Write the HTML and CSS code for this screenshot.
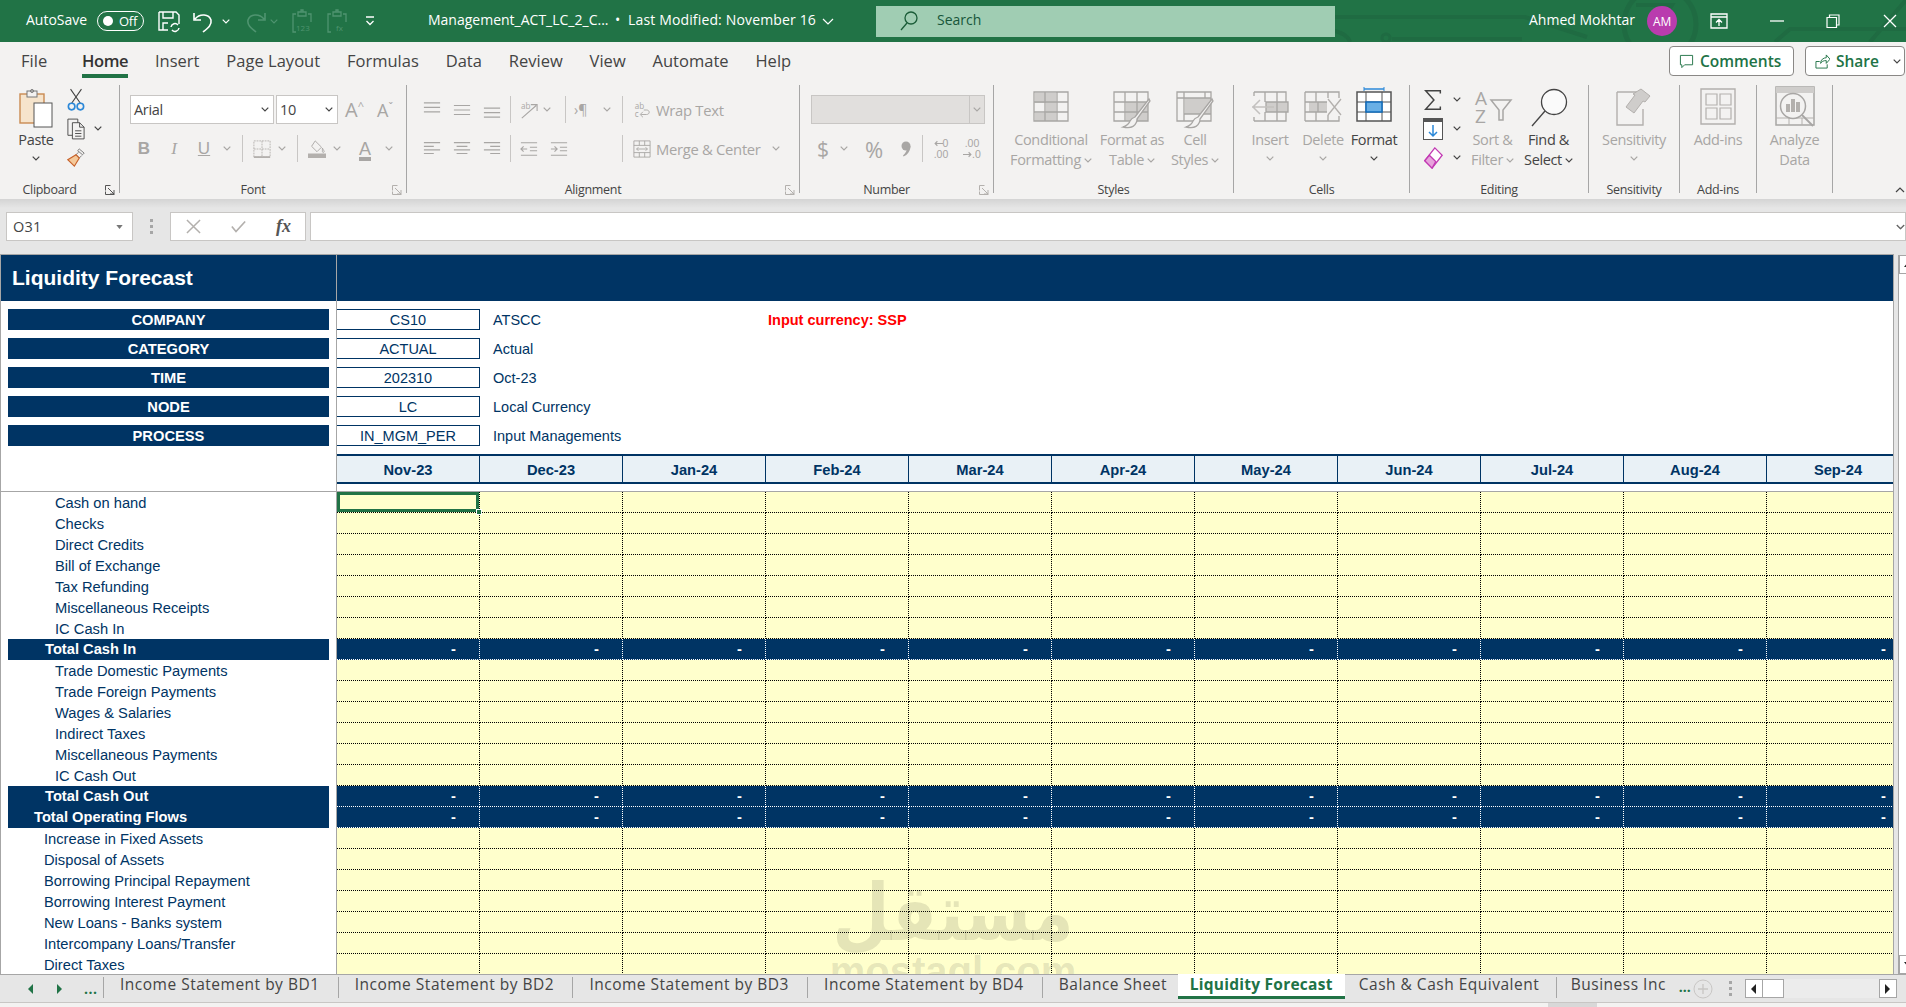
FILE: index.html
```html
<!DOCTYPE html>
<html lang="en">
<head>
<meta charset="utf-8">
<title>Liquidity Forecast</title>
<link rel="stylesheet" href="styles.css">
</head>
<body>
<svg class="sprite" aria-hidden="true">
  <symbol id="chev" viewBox="0 0 8 5"><path d="M.7.7 4 4l3.3-3.3" fill="none" stroke="currentColor" stroke-width="1.2"/></symbol>
  <symbol id="launch" viewBox="0 0 10 10"><path d="M.5 5.5V.5h5M3 3l6 6M9 5v4H5M9.5 9.500h-9v-3" fill="none" stroke="currentColor"/></symbol>
</svg>

<header class="titlebar">
  <svg class="circuit" viewBox="0 0 1906 42" aria-hidden="true"><path d="M1335 17h190l62 20M1392 39h130M1775 42l15-13h116M1870 42l36-42M1330 30c12 2 18 6 20 12" fill="none" stroke="#1f6b42" stroke-width="4"/><circle cx="1660" cy="24" r="36" fill="none" stroke="#1f6b42" stroke-width="5"/><circle cx="1386" cy="38" r="4" fill="none" stroke="#1f6b42" stroke-width="3"/><path d="M1636 5h36l-14 22" fill="none" stroke="#1f6b42" stroke-width="4"/></svg>
  <div class="tb-left">
    <span class="autosave">AutoSave</span>
    <span class="toggle"><i class="dot"></i>Off</span>
    <svg class="qa save" viewBox="0 0 24 24"><path d="M2 3h17l3 3v9M2 3v18h9M6 3v6h10V3M6 21v-7h5" fill="none" stroke="#fff" stroke-width="1.4"/><path d="M14 18a4 4 0 0 1 7-2m1 3a4 4 0 0 1-7 2" fill="none" stroke="#fff" stroke-width="1.5"/></svg>
    <svg class="qa undo" viewBox="0 0 24 24"><path d="M2 4v7h7M3 10c5-6 14-5 16 1 1 5-3 8-8 12" fill="none" stroke="#fff" stroke-width="1.6"/></svg>
    <svg class="qc undoc"><use href="#chev"/></svg>
    <svg class="qa redo" viewBox="0 0 24 24"><path d="M22 4v7h-7M21 10C16 4 7 5 5 11c-1 5 3 8 8 12" fill="none" stroke="#4f9470" stroke-width="1.6"/></svg>
    <svg class="qc redoc dim"><use href="#chev"/></svg>
    <svg class="qa pv" viewBox="0 0 24 24"><path d="M6 5H3v18h3M18 5h3v8M8 3h8v4H8zM11 3V1h2v2" fill="none" stroke="#4f9470" stroke-width="1.3"/><text x="6" y="22" class="pvt">123</text></svg>
    <svg class="qa pf" viewBox="0 0 24 24"><path d="M6 5H3v18h3M18 5h3v8M8 3h8v4H8zM11 3V1h2v2" fill="none" stroke="#4f9470" stroke-width="1.3"/><text x="11" y="22" class="pvt">fx</text></svg>
    <svg class="qat" viewBox="0 0 12 12"><path d="M2 2h8M2.500 6 6 9.500 9.500 6" fill="none" stroke="#fff" stroke-width="1.3"/></svg>
    <span class="filename">Management_ACT_LC_2_C...</span><span class="bullet">•</span><span class="modified">Last Modified: November 16</span>
    <svg class="fchev" viewBox="0 0 12 7"><path d="M1 1l5 5 5-5" fill="none" stroke="#fff" stroke-width="1.2"/></svg>
  </div>
  <div class="search">
    <svg class="search-ic" viewBox="0 0 18 20"><circle cx="11" cy="7" r="6" fill="none" stroke="#1a5c38" stroke-width="1.3"/><path d="M7 12 1 19" stroke="#1a5c38" stroke-width="1.3"/></svg>
    <span class="search-tx">Search</span>
  </div>
  <div class="tb-right">
    <span class="username">Ahmed Mokhtar</span>
    <span class="avatar">AM</span>
    <svg class="win rd" viewBox="0 0 18 16"><path d="M1 1h16v14H1zM1 4h16M9 13V7M6 9.500 9 6.500l3 3" fill="none" stroke="#fff" stroke-width="1.3"/></svg>
    <svg class="win mn" viewBox="0 0 14 14"><path d="M0 7h14" stroke="#fff" stroke-width="1.3"/></svg>
    <svg class="win rs" viewBox="0 0 14 14"><path d="M1 3.500h9.500v10H1zM3.500 3.500V1H13v10h-3" fill="none" stroke="#fff" stroke-width="1.2"/></svg>
    <svg class="win cl" viewBox="0 0 14 14"><path d="M1 1l12 12M13 1 1 13" stroke="#fff" stroke-width="1.3"/></svg>
  </div>
</header>

<nav class="menutabs">
  <span class="mt file">File</span>
  <span class="mt active">Home</span>
  <span class="mt">Insert</span>
  <span class="mt">Page Layout</span>
  <span class="mt">Formulas</span>
  <span class="mt">Data</span>
  <span class="mt">Review</span>
  <span class="mt">View</span>
  <span class="mt">Automate</span>
  <span class="mt">Help</span>
  <button class="cta comments"><svg viewBox="0 0 16 16"><path d="M1.500 1.500h13v10H6l-3 3v-3H1.500z" fill="none" stroke="#217346"/></svg>Comments</button>
  <button class="cta share"><svg viewBox="0 0 16 16"><path d="M1 15V8h4M1 15h12v-4M6 10c0-4 3-6 6-6V1l4 4.500L12 10V7c-3 0-5 1-6 3z" fill="none" stroke="#217346"/></svg>Share<svg class="share-c"><use href="#chev"/></svg></button>
</nav>

<section class="ribbon">
  <div class="group g-clip">
    <div class="gbody">
      <div class="big b-paste">
        <svg class="bi w34" viewBox="0 0 34 45"><rect x="1" y="9" width="24" height="29" fill="#f6e4cc" stroke="#c98b52" stroke-width="1.400"/><rect x="8" y="6" width="10" height="6" fill="#f3f2f1" stroke="#777"/><circle cx="13" cy="6" r="1.500" fill="none" stroke="#777"/><rect x="15" y="18" width="18" height="24" fill="#fff" stroke="#555"/></svg>
        <span class="tx">Paste</span>
        <svg class="cv"><use href="#chev"/></svg>
      </div>
      <div class="smallcol sc-clip">
        <div class="srow"><svg class="si" viewBox="0 0 16 22"><path d="M3 1l9 13M13 1 4 14" stroke="#444" fill="none"/><circle cx="4" cy="17" r="3" fill="none" stroke="#2b88d8" stroke-width="1.500"/><circle cx="12" cy="17" r="3" fill="none" stroke="#2b88d8" stroke-width="1.500"/></svg></div>
        <div class="srow"><svg class="si" viewBox="0 0 20 24"><path d="M6 19H1V1h11v4M6 5h8l5 5v13H6zM14 5v5h5M9 14h7M9 17h7M9 20h7" fill="none" stroke="#444"/></svg><svg class="cv cv-copy"><use href="#chev"/></svg></div>
        <div class="srow"><svg class="si" viewBox="0 0 22 24"><path d="M13 3l2-2 6 5-2 2zM14 5l-3 3 4 4 3-3" fill="#f3f2f1" stroke="#666"/><path d="M11 8l4 4-6 10L1 14z" fill="#f4c99a" stroke="#c8622a" stroke-width="1.400"/></svg></div>
      </div>
    </div>
    <div class="glabel"><span></span><span>Clipboard</span><svg class="launcher dark"><use href="#launch"/></svg></div>
  </div>

  <div class="group g-font">
    <div class="gbody stack p-font">
      <div class="row">
        <div class="sel-box font-sel"><span>Arial</span><svg class="cv dark"><use href="#chev"/></svg></div>
        <div class="sel-box size-sel"><span>10</span><svg class="cv dark"><use href="#chev"/></svg></div>
        <span class="grow-a">A<sup>^</sup></span><span class="shrink-a">A<sup>ˇ</sup></span>
      </div>
      <div class="row">
        <span class="c30 off-b">B</span><span class="c30 off-i">I</span><span class="c30 off-u">U</span><svg class="cv c16"><use href="#chev"/></svg>
        <i class="vsep"></i>
        <svg class="c24 ic20" viewBox="0 0 20 20"><path d="M1 1h18v18H1zM10 1v18M1 10h18" fill="none" stroke="#b3b0ad" stroke-dasharray="2 1"/><path d="M1 19h18" stroke="#b3b0ad" stroke-width="2"/></svg><svg class="cv c16"><use href="#chev"/></svg>
        <i class="vsep"></i>
        <svg class="c24 ic20" viewBox="0 0 20 20"><path d="M8 1l7 7-5 5-6-6zM16 9c1 2 2 3 2 4s-2 1-2 0 0-2 0-4z" fill="none" stroke="#a8a6a4"/><rect y="15" width="20" height="5" fill="#b3b0ad"/></svg><svg class="cv c16"><use href="#chev"/></svg>
        <span class="c40 off-color">A</span><svg class="cv c8"><use href="#chev"/></svg>
      </div>
    </div>
    <div class="glabel"><span></span><span>Font</span><svg class="launcher"><use href="#launch"/></svg></div>
  </div>

  <div class="group g-align">
    <div class="gbody stack p-align">
      <div class="row">
        <svg class="c30 ic20" viewBox="0 0 20 20"><path d="M1 2h18M1 7h18M1 12h18" stroke="#a8a6a4" stroke-width="1.300"/></svg>
        <svg class="c30 ic20" viewBox="0 0 20 20"><path d="M1 5h18M1 10h18M1 15h18" stroke="#a8a6a4" stroke-width="1.300"/></svg>
        <svg class="c30 ic20" viewBox="0 0 20 20"><path d="M1 8h18M1 13h18M1 18h18" stroke="#a8a6a4" stroke-width="1.300"/></svg>
        <i class="vsep vs-a"></i>
        <svg class="c20 ic20" viewBox="0 0 20 20"><path d="M2 19 18 5M12 4h7v7" fill="none" stroke="#a8a6a4" stroke-width="1.200"/><text x="1" y="9" class="ab">ab</text></svg><svg class="cv c16"><use href="#chev"/></svg>
        <i class="vsep vs-b"></i>
        <span class="para c20">›¶</span><svg class="cv c26"><use href="#chev"/></svg>
        <i class="vsep vs-c"></i>
        <svg class="c20 ic20" viewBox="0 0 20 20"><text x="2" y="9" class="ab">ab</text><text x="2" y="18" class="ab">c</text><path d="M9 15h6c4 0 4-5 0-5h-3M11 12l-3 3 3 3" fill="none" stroke="#a8a6a4"/></svg>
        <span class="dimtx">Wrap Text</span>
      </div>
      <div class="row">
        <svg class="c30 ic20" viewBox="0 0 20 20"><path d="M1 3h18M1 7h11M1 11h18M1 15h11" stroke="#a8a6a4" stroke-width="1.300"/></svg>
        <svg class="c30 ic20" viewBox="0 0 20 20"><path d="M1 3h18M4 7h12M1 11h18M4 15h12" stroke="#a8a6a4" stroke-width="1.300"/></svg>
        <svg class="c30 ic20" viewBox="0 0 20 20"><path d="M1 3h18M8 7h11M1 11h18M8 15h11" stroke="#a8a6a4" stroke-width="1.300"/></svg>
        <i class="vsep vs-a"></i>
        <svg class="c20 ic20" viewBox="0 0 20 20"><path d="M1 3h18M11 8h8M11 12h8M1 17h18M8 10H1M4 7l-3 3 3 3" fill="none" stroke="#a8a6a4" stroke-width="1.200"/></svg>
        <svg class="c40 ic20" viewBox="0 0 40 20"><path d="M11 3h18M21 8h8M21 12h8M11 17h18M11 10h7M15 7l3 3-3 3" fill="none" stroke="#a8a6a4" stroke-width="1.200"/></svg>
        <i class="vsep vs-d"></i>
        <svg class="c20 ic20" viewBox="0 0 20 20"><path d="M1 1h18v18H1zM1 6h18M1 14h18M7 1v5M13 1v5M7 14v5M13 14v5M4 10h12M6 8l-2 2 2 2M14 8l2 2-2 2" fill="none" stroke="#a8a6a4"/></svg>
        <span class="dimtx">Merge &amp; Center</span><svg class="cv cv-merge"><use href="#chev"/></svg>
      </div>
    </div>
    <div class="glabel"><span></span><span>Alignment</span><svg class="launcher"><use href="#launch"/></svg></div>
  </div>

  <div class="group g-num">
    <div class="gbody stack p-num">
      <div class="row">
        <div class="num-sel"><span></span><svg class="cv"><use href="#chev"/></svg></div>
      </div>
      <div class="row">
        <span class="c26 dollar">$</span><svg class="cv c16"><use href="#chev"/></svg>
        <span class="c44 pct">%</span>
        <svg class="comma" viewBox="0 0 10 16"><circle cx="5" cy="5" r="4.500" fill="#a8a6a4"/><path d="M9.500 5c0 5-3 9-7 10.500L2 14.500C5 12 6 9 6 7z" fill="#a8a6a4"/></svg>
        <i class="vsep vs-n"></i>
        <span class="dec dec1"><svg viewBox="0 0 8 8"><path d="M8 4H1M3 2 1 4l2 2" fill="none" stroke="#a8a6a4"/></svg>0<br>.00</span>
        <span class="dec dec2">.00<br><svg viewBox="0 0 8 8"><path d="M0 4h7M5 2l2 2-2 2" fill="none" stroke="#a8a6a4"/></svg>.0</span>
      </div>
    </div>
    <div class="glabel"><span></span><span>Number</span><svg class="launcher"><use href="#launch"/></svg></div>
  </div>

  <div class="group g-styles">
    <div class="gbody">
      <div class="big b-cf">
        <svg class="bi w36" viewBox="0 0 36 45"><path d="M2 8h21v10H2zM13 18h10v10H13zM2 28h21v8H2z" fill="#cfcdcb"/><path d="M1 7h34v29H1zM1 17h34M1 27h34M12 7v29M24 7v29" fill="none" stroke="#a8a6a4" stroke-width="1.300"/></svg>
        <span class="tx dimc">Conditional</span><span class="tx dimc">Formatting<svg class="cv inl"><use href="#chev"/></svg></span>
      </div>
      <div class="big b-ft">
        <svg class="bi w38" viewBox="0 0 38 45"><path d="M13 17h22v19H13z" fill="#cfcdcb"/><path d="M1 7h34v29H1zM1 17h34M1 27h34M12 7v29M24 7v29" fill="none" stroke="#a8a6a4" stroke-width="1.300"/><path d="M36 14 22 32c-3 1-4 2-5 4-1 3-4 5-7 6 5 1 11 1 13-4 1-1 1-3 1-4L37 16z" fill="#f3f2f1" stroke="#a8a6a4" stroke-width="1.300"/></svg>
        <span class="tx dimc">Format as</span><span class="tx dimc">Table<svg class="cv inl"><use href="#chev"/></svg></span>
      </div>
      <div class="big b-cs">
        <svg class="bi w38" viewBox="0 0 38 45"><path d="M9 13h26v16H9z" fill="#cfcdcb"/><path d="M1 7h34v29H1zM1 13h34M8 7v29M29 7v6M8 29h27" fill="none" stroke="#a8a6a4" stroke-width="1.300"/><path d="M36 14 22 32c-3 1-4 2-5 4-1 3-4 5-7 6 5 1 11 1 13-4 1-1 1-3 1-4L37 16z" fill="#f3f2f1" stroke="#a8a6a4" stroke-width="1.300"/></svg>
        <span class="tx dimc">Cell</span><span class="tx dimc">Styles<svg class="cv inl"><use href="#chev"/></svg></span>
      </div>
    </div>
    <div class="glabel center"><span>Styles</span></div>
  </div>

  <div class="group g-cells">
    <div class="gbody">
      <div class="big b-ins">
        <svg class="bi w38" viewBox="0 0 38 45"><path d="M15 17h22v10H15z" fill="#cfcdcb"/><path d="M3 7h32v10M3 36h32V27M3 7v4M3 36v-4M14 7v10M26 7v10M14 27v9M26 27v9M15 17h22v10H15zM26 17v10" fill="none" stroke="#a8a6a4" stroke-width="1.300"/><path d="M1 22h22M9 15l-7 7 7 7" fill="none" stroke="#c3c1bf" stroke-width="1.500"/></svg>
        <span class="tx dimc">Insert</span><svg class="cv"><use href="#chev"/></svg>
      </div>
      <div class="big b-del">
        <svg class="bi w38" viewBox="0 0 38 45"><path d="M5 17h18v10H5z" fill="#cfcdcb"/><path d="M1 7h34v6M1 36h34v-5M1 7v29M1 17h22M1 27h22M12 7v10M24 7v6M12 27v9M24 30v6M14 17v10" fill="none" stroke="#a8a6a4" stroke-width="1.300"/><path d="M24 14l13 16M37 14 24 30" stroke="#b3b0ad" stroke-width="1.300"/></svg>
        <span class="tx dimc">Delete</span><svg class="cv"><use href="#chev"/></svg>
      </div>
      <div class="big b-fmt">
        <svg class="bi w36" viewBox="0 0 36 45"><path d="M8 4h20" stroke="#2b88d8" stroke-width="1.500"/><path d="M8 2v4M28 2v4" stroke="#2b88d8"/><rect x="1" y="7" width="34" height="29" fill="#fff" stroke="#555" stroke-width="1.500"/><path d="M1 17h34M1 27h34M10 7v29M26 7v29" stroke="#555"/><rect x="10" y="17" width="16" height="10" fill="#69afe5" stroke="#0f6cbd" stroke-width="1.500"/></svg>
        <span class="tx">Format</span><svg class="cv dark"><use href="#chev"/></svg>
      </div>
    </div>
    <div class="glabel center"><span>Cells</span></div>
  </div>

  <div class="group g-edit">
    <div class="gbody">
      <div class="smallcol sc-edit">
        <div class="srow"><svg class="si2" viewBox="0 0 20 24"><path d="M18 5V2H2l9 10L2 22h16v-3" fill="none" stroke="#444" stroke-width="1.600"/></svg><svg class="cv dark c16"><use href="#chev"/></svg></div>
        <div class="srow"><svg class="si2" viewBox="0 0 20 22"><rect x=".5" y=".5" width="19" height="21" fill="#fff" stroke="#555"/><path d="M1 2.500h18" stroke="#555" stroke-width="3"/><path d="M10 7v11M6 14l4 4 4-4" fill="none" stroke="#2b88d8" stroke-width="1.500"/></svg><svg class="cv dark c16"><use href="#chev"/></svg></div>
        <div class="srow"><svg class="si2" viewBox="0 0 22 24"><path d="M13 1l8 8-11 14-8-8z" fill="#fff" stroke="#c239b3" stroke-width="1.400"/><path d="M7 9l7 7-4 7-8-8z" fill="#e7a3dc" stroke="#c239b3" stroke-width="1.400"/></svg><svg class="cv dark c16"><use href="#chev"/></svg></div>
      </div>
      <div class="big b-sort">
        <svg class="bi w40" viewBox="0 0 40 45"><text x="2" y="20" class="az">A</text><text x="2" y="38" class="az">Z</text><path d="M18 15h20l-8 10v10h-4V25z" fill="none" stroke="#a8a6a4" stroke-width="1.500"/></svg>
        <span class="tx dimc">Sort &amp;</span><span class="tx dimc">Filter<svg class="cv inl"><use href="#chev"/></svg></span>
      </div>
      <div class="big b-find">
        <svg class="bi w40" viewBox="0 0 40 45"><circle cx="25" cy="17" r="12.500" fill="#fafafa" stroke="#444" stroke-width="1.300"/><path d="M16 26 3 41" stroke="#444" stroke-width="1.300"/></svg>
        <span class="tx">Find &amp;</span><span class="tx">Select<svg class="cv inl dark"><use href="#chev"/></svg></span>
      </div>
    </div>
    <div class="glabel center"><span>Editing</span></div>
  </div>

  <div class="group g-sens">
    <div class="gbody center-body">
      <div class="big b-sens">
        <svg class="bi w36" viewBox="0 0 36 45"><path d="M1 7h20M1 7v33h26V24" fill="none" stroke="#b3b0ad" stroke-width="1.400"/><path d="M25 4l9 7-5 6-2-1-9 12-8-6 9-12-2-1z" fill="#cfcdcb" stroke="#b3b0ad"/></svg>
        <span class="tx dimc">Sensitivity</span><svg class="cv"><use href="#chev"/></svg>
      </div>
    </div>
    <div class="glabel center"><span>Sensitivity</span></div>
  </div>

  <div class="group g-addin">
    <div class="gbody center-body">
      <div class="big b-add">
        <svg class="bi w36" viewBox="0 0 36 45"><path d="M1 4h34v35H1z" fill="none" stroke="#b3b0ad" stroke-width="1.400"/><path d="M6 9h11v11H6zM20 9h11v11H20zM6 23h11v11H6zM20 23h11v11H20z" fill="none" stroke="#b3b0ad" stroke-width="1.200"/></svg>
        <span class="tx dimc">Add-ins</span>
      </div>
    </div>
    <div class="glabel center"><span>Add-ins</span></div>
  </div>

  <div class="group g-an">
    <div class="gbody center-body">
      <div class="big b-an">
        <svg class="bi w40" viewBox="0 0 40 45"><path d="M1 2h38v38H1z" fill="#f3f2f1" stroke="#a8a6a4" stroke-width="1.500"/><path d="M1 2h38v6H1z" fill="#cfcdcb"/><path d="M1 33h38M14 33v7M27 33v7" stroke="#b3b0ad"/><circle cx="18" cy="21" r="12.500" fill="#f3f2f1" stroke="#a8a6a4" stroke-width="1.500"/><path d="M11 19h4v8h-4zM16 14h4v13h-4zM21 17h4v10h-4z" fill="#b3b0ad"/><path d="M27 30l11 11" stroke="#a8a6a4" stroke-width="1.800"/></svg>
        <span class="tx dimc">Analyze</span><span class="tx dimc">Data</span>
      </div>
    </div>
  </div>

  <svg class="collapse" viewBox="0 0 10 6"><path d="M1 5l4-4 4 4" fill="none" stroke="#444" stroke-width="1.200"/></svg>
</section>
<div class="ribbon-shadow"></div>

<section class="formula">
  <div class="namebox"><span>O31</span><svg viewBox="0 0 8 5"><path d="M0 0h8L4 5z" fill="#777"/></svg></div>
  <div class="fdots"><i></i><i></i><i></i></div>
  <div class="fbtns">
    <svg viewBox="0 0 16 16"><path d="M1 1l14 14M15 1 1 15" stroke="#b3b0ad" stroke-width="1.600"/></svg>
    <svg viewBox="0 0 18 16"><path d="M1 8l5 6L17 2" fill="none" stroke="#b3b0ad" stroke-width="2"/></svg>
    <span class="fx">fx</span>
  </div>
  <div class="finput"><svg viewBox="0 0 8 5"><use href="#chev"/></svg></div>
</section>

<main class="workspace">
  <div class="sheet">
    <div class="head">
      <div class="hleft">
        <div class="title">Liquidity Forecast</div>
        <div class="bars">
          <div class="bar">COMPANY</div>
          <div class="bar">CATEGORY</div>
          <div class="bar">TIME</div>
          <div class="bar">NODE</div>
          <div class="bar">PROCESS</div>
        </div>
      </div>
      <div class="hright">
        <div class="title"></div>
        <div class="params">
          <div class="param"><span class="code">CS10</span><span class="desc">ATSCC</span><span class="note">Input currency: SSP</span></div>
          <div class="param"><span class="code">ACTUAL</span><span class="desc">Actual</span></div>
          <div class="param"><span class="code">202310</span><span class="desc">Oct-23</span></div>
          <div class="param"><span class="code">LC</span><span class="desc">Local Currency</span></div>
          <div class="param"><span class="code">IN_MGM_PER</span><span class="desc">Input Managements</span></div>
        </div>
        <div class="months">
          <span>Nov-23</span><span>Dec-23</span><span>Jan-24</span><span>Feb-24</span><span>Mar-24</span><span>Apr-24</span><span>May-24</span><span>Jun-24</span><span>Jul-24</span><span>Aug-24</span><span>Sep-24</span>
        </div>
      </div>
    </div>
    <table class="grid">
      <colgroup><col class="col-l"><col class="col-m"><col class="col-m"><col class="col-m"><col class="col-m"><col class="col-m"><col class="col-m"><col class="col-m"><col class="col-m"><col class="col-m"><col class="col-m"><col class="col-m"></colgroup>
      <tbody>
        <tr><th class="i1">Cash on hand</th><td class="cursor"><i class="handle"></i></td><td></td><td></td><td></td><td></td><td></td><td></td><td></td><td></td><td></td><td></td></tr>
        <tr><th class="i1">Checks</th><td></td><td></td><td></td><td></td><td></td><td></td><td></td><td></td><td></td><td></td><td></td></tr>
        <tr><th class="i1">Direct Credits</th><td></td><td></td><td></td><td></td><td></td><td></td><td></td><td></td><td></td><td></td><td></td></tr>
        <tr><th class="i1">Bill of Exchange</th><td></td><td></td><td></td><td></td><td></td><td></td><td></td><td></td><td></td><td></td><td></td></tr>
        <tr><th class="i1">Tax Refunding</th><td></td><td></td><td></td><td></td><td></td><td></td><td></td><td></td><td></td><td></td><td></td></tr>
        <tr><th class="i1">Miscellaneous Receipts</th><td></td><td></td><td></td><td></td><td></td><td></td><td></td><td></td><td></td><td></td><td></td></tr>
        <tr><th class="i1">IC Cash In</th><td></td><td></td><td></td><td></td><td></td><td></td><td></td><td></td><td></td><td></td><td></td></tr>
        <tr class="tot"><th class="i2"><span>Total Cash In</span></th><td>-</td><td>-</td><td>-</td><td>-</td><td>-</td><td>-</td><td>-</td><td>-</td><td>-</td><td>-</td><td>-</td></tr>
        <tr><th class="i1">Trade Domestic Payments</th><td></td><td></td><td></td><td></td><td></td><td></td><td></td><td></td><td></td><td></td><td></td></tr>
        <tr><th class="i1">Trade Foreign Payments</th><td></td><td></td><td></td><td></td><td></td><td></td><td></td><td></td><td></td><td></td><td></td></tr>
        <tr><th class="i1">Wages &amp; Salaries</th><td></td><td></td><td></td><td></td><td></td><td></td><td></td><td></td><td></td><td></td><td></td></tr>
        <tr><th class="i1">Indirect Taxes</th><td></td><td></td><td></td><td></td><td></td><td></td><td></td><td></td><td></td><td></td><td></td></tr>
        <tr><th class="i1">Miscellaneous Payments</th><td></td><td></td><td></td><td></td><td></td><td></td><td></td><td></td><td></td><td></td><td></td></tr>
        <tr><th class="i1">IC Cash Out</th><td></td><td></td><td></td><td></td><td></td><td></td><td></td><td></td><td></td><td></td><td></td></tr>
        <tr class="tot"><th class="i2"><span>Total Cash Out</span></th><td>-</td><td>-</td><td>-</td><td>-</td><td>-</td><td>-</td><td>-</td><td>-</td><td>-</td><td>-</td><td>-</td></tr>
        <tr class="tot"><th class="i3"><span>Total Operating Flows</span></th><td>-</td><td>-</td><td>-</td><td>-</td><td>-</td><td>-</td><td>-</td><td>-</td><td>-</td><td>-</td><td>-</td></tr>
        <tr><th class="i4">Increase in Fixed Assets</th><td></td><td></td><td></td><td></td><td></td><td></td><td></td><td></td><td></td><td></td><td></td></tr>
        <tr><th class="i4">Disposal of Assets</th><td></td><td></td><td></td><td></td><td></td><td></td><td></td><td></td><td></td><td></td><td></td></tr>
        <tr><th class="i4">Borrowing Principal Repayment</th><td></td><td></td><td></td><td></td><td></td><td></td><td></td><td></td><td></td><td></td><td></td></tr>
        <tr><th class="i4">Borrowing Interest Payment</th><td></td><td></td><td></td><td></td><td></td><td></td><td></td><td></td><td></td><td></td><td></td></tr>
        <tr><th class="i4">New Loans - Banks system</th><td></td><td></td><td></td><td></td><td></td><td></td><td></td><td></td><td></td><td></td><td></td></tr>
        <tr><th class="i4">Intercompany Loans/Transfer</th><td></td><td></td><td></td><td></td><td></td><td></td><td></td><td></td><td></td><td></td><td></td></tr>
        <tr><th class="i4">Direct Taxes</th><td></td><td></td><td></td><td></td><td></td><td></td><td></td><td></td><td></td><td></td><td></td></tr>
      </tbody>
    </table>
    <div class="watermark"><span class="wm-ar" lang="ar" dir="rtl">مستقل</span><span class="wm-en">mostaql.com</span></div>
  </div>
  <div class="vscroll">
    <div class="vbtn"><svg viewBox="0 0 8 5"><path d="M0 5h8L4 0z" fill="#222"/></svg></div>
    <div class="vbtn"><svg viewBox="0 0 8 5"><path d="M0 0h8L4 5z" fill="#222"/></svg></div>
  </div>
</main>

<footer class="tabbar">
  <div class="tabnav">
    <svg viewBox="0 0 5 10"><path d="M5 0v10L0 5z" fill="#217346"/></svg>
    <svg viewBox="0 0 5 10"><path d="M0 0v10l5-5z" fill="#217346"/></svg>
    <span>...</span>
  </div>
  <span class="stab t-i">Income Statement by BD1</span>
  <span class="stab t-i">Income Statement by BD2</span>
  <span class="stab t-i">Income Statement by BD3</span>
  <span class="stab t-i">Income Statement by BD4</span>
  <span class="stab t-b">Balance Sheet</span>
  <span class="stab t-a">Liquidity Forecast</span>
  <span class="stab t-c">Cash &amp; Cash Equivalent</span>
  <span class="stab t-n">Business Inc</span>
  <span class="more">...</span>
  <svg class="addsheet" viewBox="0 0 20 20"><circle cx="10" cy="10" r="9" fill="none" stroke="#c8c6c4"/><path d="M10 5v10M5 10h10" stroke="#c8c6c4" stroke-width="1.300"/></svg>
  <div class="fdots tabdots"><i></i><i></i><i></i></div>
  <div class="hscroll">
    <span class="hbtn"><svg viewBox="0 0 5 10"><path d="M5 0v10L0 5z" fill="#222"/></svg></span>
    <span class="hthumb"></span>
    <span class="htrack"></span>
    <span class="hbtn"><svg viewBox="0 0 5 10"><path d="M0 0v10l5-5z" fill="#222"/></svg></span>
  </div>
</footer>
<div class="status"><span class="status-blob"></span></div>
</body>
</html>
```

FILE: styles.css
```css
* { box-sizing: border-box; }
html, body { margin: 0; padding: 0; }
body {
  width: 1906px; height: 1007px; overflow: hidden;
  font-family: "Open Sans", "Noto Sans", sans-serif;
  background: #e6e6e6; color: #444;
  display: flex; flex-direction: column;
}
.sprite { display: none; }
svg { display: block; flex: none; }

/* Title bar */
.titlebar { height: 42px; background: #217346; color: #fff; display: flex; align-items: center; position: relative; flex: none; font-size: 14px; }
.circuit { position: absolute; inset: 0; width: 100%; height: 100%; }
.tb-left { width: 876px; display: flex; align-items: center; position: relative; }
.autosave, .filename, .modified, .username, .bullet, .search-tx { line-height: 18px; padding-bottom: 2px; }
.autosave { margin-left: 26px; width: 63px; white-space: nowrap; }
.toggle { margin-left: 8px; width: 47px; height: 20px; border: 1px solid #fff; border-radius: 10px; display: flex; align-items: center; font-size: 13px; padding-left: 5px; gap: 6px; letter-spacing: -.3px; }
.dot { width: 10px; height: 10px; border-radius: 50%; background: #fff; flex: none; }
.qa { width: 24px; height: 24px; }
.qc { width: 8px; height: 5px; color: #fff; }
.qc.dim { color: #4f9470; }
.save { margin-left: 13px; }
.undo { margin-left: 11px; }
.undoc { margin-left: 6px; }
.redo { margin-left: 13px; }
.redoc { margin-left: 3px; }
.pv { margin-left: 12px; }
.pf { margin-left: 11px; }
.pvt { font-size: 8px; fill: #4f9470; font-family: "Open Sans", sans-serif; }
.qat { width: 12px; height: 12px; margin-left: 15px; }
.filename { margin-left: 52px; width: 181px; white-space: nowrap; }
.bullet { width: 19px; padding-left: 6px; }
.modified { width: 188px; white-space: nowrap; letter-spacing: .15px; }
.fchev { width: 12px; height: 7px; margin-left: 6px; }
.search { width: 459px; height: 31px; background: #a0cdb3; color: #17563a; display: flex; align-items: center; position: relative; font-size: 14px; }
.search-ic { width: 18px; height: 20px; margin-left: 24px; margin-right: 19px; }
.tb-right { flex: 1; display: flex; align-items: center; position: relative; }
.username { margin-left: 194px; width: 118px; white-space: nowrap; }
.avatar { width: 30px; height: 30px; border-radius: 50%; background: #b93cae; font-size: 12px; display: flex; align-items: center; justify-content: center; letter-spacing: -.3px; }
.win { flex: none; }
.rd { width: 18px; height: 16px; margin-left: 33px; }
.mn { width: 14px; height: 14px; margin-left: 42px; }
.rs { width: 14px; height: 14px; margin-left: 42px; }
.cl { width: 14px; height: 14px; margin-left: 43px; }

/* Menu tabs */
.menutabs { height: 36px; background: #f3f2f1; display: flex; gap: 26.8px; padding-left: 21px; position: relative; flex: none; }
.mt { height: 36px; line-height: 38px; font-size: 16.5px; color: #444; white-space: nowrap; letter-spacing: .02px; }
.mt.file { margin-right: 8px; }
.mt.active { font-weight: 600; color: #333; border-bottom: 4px solid #217346; letter-spacing: -.4px; }
.cta { height: 30px; margin-top: 4px; background: #fff; border: 1px solid #8a8886; border-radius: 4px; display: flex; align-items: center; font: 600 15.5px "Open Sans", sans-serif; color: #217346; padding: 0; }
.cta svg { width: 15px; height: 15px; margin: 0 6px 0 9px; }
.comments { width: 125px; margin-left: auto; }
.share { width: 100px; margin-left: -15.8px; margin-right: 1px; }
.cta .share-c { width: 8px; height: 5px; margin: 0 0 0 14px; color: #444; }

/* Ribbon */
.ribbon { height: 121px; background: #f3f2f1; display: flex; padding-top: 7px; flex: none; position: relative; }
.ribbon-shadow { height: 13px; flex: none; background: linear-gradient(#d4d4d4, #e6e6e6 70%); }
.group { height: 108px; border-right: 1px solid #a6a6a6; display: flex; flex-direction: column; flex: none; }
.g-clip { width: 120px; }
.g-font { width: 287px; }
.g-align { width: 393px; }
.g-num { width: 194px; }
.g-styles { width: 240px; }
.g-cells { width: 176px; }
.g-edit { width: 179px; }
.g-sens { width: 91px; }
.g-addin { width: 77px; }
.g-an { width: 76px; }
.gbody { flex: 1; display: flex; min-height: 0; }
.center-body { justify-content: center; }
.glabel { height: 14px; margin-bottom: -4px; line-height: 14px; font-size: 12.5px; letter-spacing: -.3px; color: #444; display: grid; grid-template-columns: 1fr auto 1fr; justify-items: center; align-items: center; flex: none; padding-right: 20px; }
.glabel.center { display: flex; justify-content: center; padding-right: 0; }
.launcher { width: 10px; height: 10px; justify-self: end; margin-right: -16px; color: #b3b0ad; }
.launcher.dark { color: #555; }

.big { display: flex; flex-direction: column; align-items: center; flex: none; }
.bi { height: 45px; }
.w34 { width: 34px; }
.w36 { width: 36px; }
.w38 { width: 38px; }
.w40 { width: 40px; }
.tx { height: 20px; line-height: 20px; font-size: 14.5px; letter-spacing: -.35px; white-space: nowrap; color: #444; display: flex; align-items: center; }
.dimc { color: #a8a6a4; }
.cv { width: 8px; height: 5px; color: #a8a6a4; flex: none; }
.cv.dark { color: #444; }
.big > .cv { margin-top: 6px; }
.cv.inl { margin-left: 3px; }
.b-paste { width: 48px; margin-left: 12px; }
.b-paste > .cv { color: #444; }
.smallcol { display: flex; flex-direction: column; }
.srow { height: 29px; display: flex; align-items: center; }
.sc-clip { width: 50px; margin-left: 1px; }
.si { width: 18px; height: 24px; margin-left: 6px; }
.cv-copy { margin-left: 9px; color: #444; }
.sc-edit { margin-left: 12px; }
.si2 { width: 22px; height: 22px; margin-right: 5px; }
.srow .c16 { width: 8px; padding: 0; margin: 0 4px; }

.stack { flex-direction: column; gap: 10px; padding-top: 10px; }
.row { height: 29px; display: flex; align-items: center; }
.p-font { padding-left: 9px; }
.p-align { padding-left: 10px; }
.p-num { padding-left: 10px; }
.sel-box { height: 29px; background: #fff; border: 1px solid #c8c6c4; display: flex; align-items: center; justify-content: space-between; font-size: 14.5px; padding: 0 4px 0 3px; letter-spacing: -.3px; }
.font-sel { width: 144px; margin-left: 1px; }
.size-sel { width: 62px; margin-left: 2px; }
.grow-a, .shrink-a { color: #a8a6a4; font-size: 20px; line-height: 1; display: flex; }
.grow-a { margin-left: 7px; width: 32px; }
.shrink-a { width: 24px; font-size: 18px; }
sup { font-size: 11px; line-height: 1; vertical-align: baseline; }
.c8 { width: 8px; }
.c16 { width: 16px; padding: 0 4px; }
.c20 { width: 20px; }
.c24 { width: 24px; }
.c26 { width: 26px; }
.c30 { width: 30px; }
.c40 { width: 40px; }
.c44 { width: 44px; }
svg.c16 { height: 5px; }
svg.c26 { height: 5px; padding: 0 9px; }
.ic20 { height: 18px; }
.off-b, .off-i, .off-u, .off-color { color: #a8a6a4; font-family: "Liberation Sans", sans-serif; font-size: 17px; text-align: center; }
.off-b { font-weight: 700; }
.off-i { font-family: "Liberation Serif", serif; font-style: italic; }
.off-u { text-decoration: underline; }
.off-color { font-size: 18px; line-height: 18px; text-decoration: underline; text-decoration-thickness: 4px; text-underline-offset: 2px; }
.vsep { width: 1px; height: 27px; background: #c8c6c4; margin: 0 7px; flex: none; }
.vs-a { margin: 0 8px 0 3px; }
.vs-b { margin: 0 8px 0 10px; }
.vs-c { margin: 0 9px 0 2px; }
.vs-d { margin: 0 9px 0 43px; }
.vs-n { margin: 0 8px 0 6px; }
.ab { font-size: 9px; fill: #a8a6a4; font-family: "Open Sans", sans-serif; }
.para { color: #a8a6a4; font-size: 14px; white-space: nowrap; }
.dimtx { color: #a8a6a4; font-size: 14.8px; letter-spacing: -.3px; white-space: nowrap; margin-left: 4px; }
.cv-merge { margin-left: 11px; }
.num-sel { width: 174px; margin-left: 1px; height: 29px; background: #e1dfdd; border: 1px solid #c8c6c4; display: flex; align-items: center; }
.num-sel span { flex: 1; height: 100%; border-right: 1px solid #c8c6c4; }
.num-sel .cv { margin: 0 3px; }
.dollar { color: #a8a6a4; font-size: 21px; text-align: center; }
.pct { color: #a8a6a4; font-size: 22px; text-align: center; }
.comma { width: 10px; height: 16px; margin: 0 5px; }
.dec { color: #a8a6a4; font-size: 10.5px; line-height: 11px; width: 20px; text-align: center; font-family: "Liberation Sans", sans-serif; }
.dec svg { display: inline-block; width: 9px; height: 9px; vertical-align: -1px; }
.dec2 { margin-left: 11px; }
.b-cf { width: 98px; margin-left: 8px; }
.b-ft { width: 64px; }
.b-cs { width: 62px; }
.b-ins { width: 52px; margin-left: 10px; }
.b-del { width: 54px; }
.b-fmt { width: 48px; }
.b-sort { width: 55px; }
.b-find { width: 57px; }
.b-sens, .b-add, .b-an { width: 76px; }
.az { font-size: 19px; fill: #a8a6a4; font-family: "Open Sans", sans-serif; }
.collapse { position: absolute; right: 1px; bottom: 6px; width: 10px; height: 6px; }

/* Formula bar */
.formula { height: 29px; background: #e6e6e6; display: flex; margin-bottom: 13px; flex: none; }
.namebox { width: 127px; margin-left: 6px; background: #fff; border: 1px solid #c8c6c4; display: flex; align-items: center; justify-content: space-between; padding: 0 9px 0 6px; font-size: 14.5px; letter-spacing: .2px; }
.namebox svg { width: 7px; height: 4px; }
.fdots { width: 37px; display: flex; flex-direction: column; align-items: center; justify-content: center; gap: 3px; }
.fdots i { width: 3px; height: 3px; background: #a6a6a6; }
.fbtns { width: 136px; background: #fff; border: 1px solid #c8c6c4; display: flex; align-items: center; gap: 30px; padding-left: 15px; }
.fbtns svg { width: 15px; height: 15px; }
.fx { font: italic 700 18px "Liberation Serif", serif; color: #555; }
.finput { flex: 1; margin-left: 4px; background: #fff; border: 1px solid #c8c6c4; display: flex; align-items: center; justify-content: flex-end; color: #666; }
.finput svg { width: 9px; height: 6px; }

/* Sheet */
.workspace { height: 720px; display: flex; flex: none; }
.sheet { width: 1894px; height: 720px; border: solid #a6a6a6; border-width: 1px 1px 0 1px; background: #fff; overflow: hidden; position: relative; font-family: "Liberation Sans", Arial, sans-serif; flex: none; }
.head { display: flex; height: 236px; }
.hleft { width: 336px; border-right: 1px solid #a6a6a6; flex: none; }
.hright { flex: 1; min-width: 0; }
.title { height: 46px; background: #003464; color: #fff; font-weight: 700; font-size: 21px; line-height: 46px; padding-left: 11px; }
.bars { padding: 8px 7px 0 7px; display: flex; flex-direction: column; gap: 8px; }
.bar { height: 21px; background: #003464; color: #fff; font-weight: 700; font-size: 14.7px; line-height: 22px; text-align: center; }
.params { padding-top: 8px; display: flex; flex-direction: column; gap: 8px; }
.param { height: 21px; display: flex; font-size: 14.5px; line-height: 20px; color: #003464; }
.desc { width: 288px; padding-left: 13px; flex: none; line-height: 22px; }
.code { width: 143px; border: 1px solid #003464; border-left: 0; text-align: center; flex: none; }
.note { color: #ff0000; font-weight: 700; line-height: 22px; }
.months { margin-top: 8px; height: 30px; display: flex; background: #e9f1f6; border-top: 2px solid #003464; border-bottom: 2px solid #003464; }
.months span { width: 143px; flex: none; border-right: 1px solid #003464; text-align: center; font-weight: 700; font-size: 14.7px; line-height: 28px; color: #003464; }
.grid { width: 1909px; table-layout: fixed; border-collapse: separate; border-spacing: 0; border-top: 1px solid #a6a6a6; font-size: 14.7px; }
.col-l { width: 336px; }
.col-m { width: 143px; }
.grid th { height: 21px; padding: 0; font-weight: 400; text-align: left; color: #003464; background: #fff; border-right: 1px solid #a6a6a6; white-space: nowrap; line-height: 20px; }
.grid td { height: 21px; padding: 0 23px 0 0; background: #ffffcc; border-right: 1px dotted #000; border-bottom: 1px dotted #000; text-align: right; }
th.i1 { padding-left: 54px; }
th.i4 { padding-left: 43px; }
.grid .tot th { padding: 0 7px 0 7px; color: #fff; font-weight: 700; }
.tot th span { display: block; height: 21px; background: #003464; }
.i2 span { padding-left: 37px; }
.i3 span { padding-left: 26px; }
.grid .tot td { background: #003464; color: #fff; font-weight: 700; border-right-color: #fff; border-bottom-color: #fff; line-height: 20px; }
.grid td.cursor { position: relative; box-shadow: inset 0 0 0 3px #217346; }
.handle { position: absolute; right: -3px; bottom: -3px; width: 6px; height: 6px; background: #217346; border: 1px solid #fff; z-index: 2; }
.watermark { position: absolute; left: 837px; top: 624px; width: 230px; display: flex; flex-direction: column; align-items: center; color: rgba(70, 70, 60, .14); pointer-events: none; }
.wm-ar { font: 700 66px/70px "DejaVu Sans", sans-serif; white-space: nowrap; transform: scaleY(1.2); }
.wm-en { font: 700 40px/44px "Liberation Sans", sans-serif; }
.vscroll { width: 8px; margin-left: 4px; height: 719px; margin-top: 1px; background: #fff; border-left: 1px solid #a6a6a6; display: flex; flex-direction: column; justify-content: space-between; flex: none; }
.vbtn { height: 19px; border: 1px solid #a6a6a6; border-right: 0; background: #fff; display: flex; align-items: center; padding-left: 4px; }
.vbtn svg { width: 8px; height: 5px; }

/* Sheet tabs */
.tabbar { height: 29px; background: #e6e6e6; border-top: 1px solid #a6a6a6; border-bottom: 1px solid #c8c6c4; display: flex; flex: none; position: relative; font-size: 15.5px; color: #444; letter-spacing: .5px; }
.tabnav { width: 103px; display: flex; align-items: center; color: #217346; }
.tabnav svg { width: 5px; height: 10px; }
.tabnav svg:first-child { margin-left: 28px; margin-right: 24px; }
.tabnav span { margin-left: 22px; font-weight: 700; font-size: 14px; }
.stab { height: 21px; line-height: 14px; border-left: 1px solid #a6a6a6; margin-top: 2px; padding-left: 16px; white-space: nowrap; flex: none; }
.t-i { width: 234.700px; }
.t-b { width: 136px; }
.t-a { width: 167px; border: 0; border-bottom: 3px solid #217346; margin-top: -1px; height: 25px; background: #fff; color: #217346; font-weight: 700; line-height: 20px; padding-left: 12px; letter-spacing: .25px; }
.t-a + .stab { border-left: 0; }
.t-c { width: 211px; padding-left: 14px; }
.t-n { width: 123px; padding-left: 14px; overflow-x: clip; }
.more { color: #217346; font-weight: 700; font-size: 14px; width: 14px; line-height: 24px; letter-spacing: 0; }
.addsheet { width: 20px; height: 20px; margin: 4px 0 0 0; }
.tabdots { width: 20px; margin-left: 8px; }
.hscroll { margin: 4px 0 0 4px; width: 152px; height: 19px; display: flex; }
.hbtn { width: 18px; background: #fff; border: 1px solid #a6a6a6; display: flex; align-items: center; justify-content: center; flex: none; }
.hbtn svg { width: 5px; height: 10px; }
.hthumb { width: 21px; background: #fff; border: 1px solid #a6a6a6; border-left: 0; flex: none; }
.htrack { flex: 1; background: #ececec; }
.status { height: 5px; background: #f3f2f1; flex: none; display: flex; }
.status-blob { width: 49px; margin-left: 1548px; background: #d8d8d8; }
```
